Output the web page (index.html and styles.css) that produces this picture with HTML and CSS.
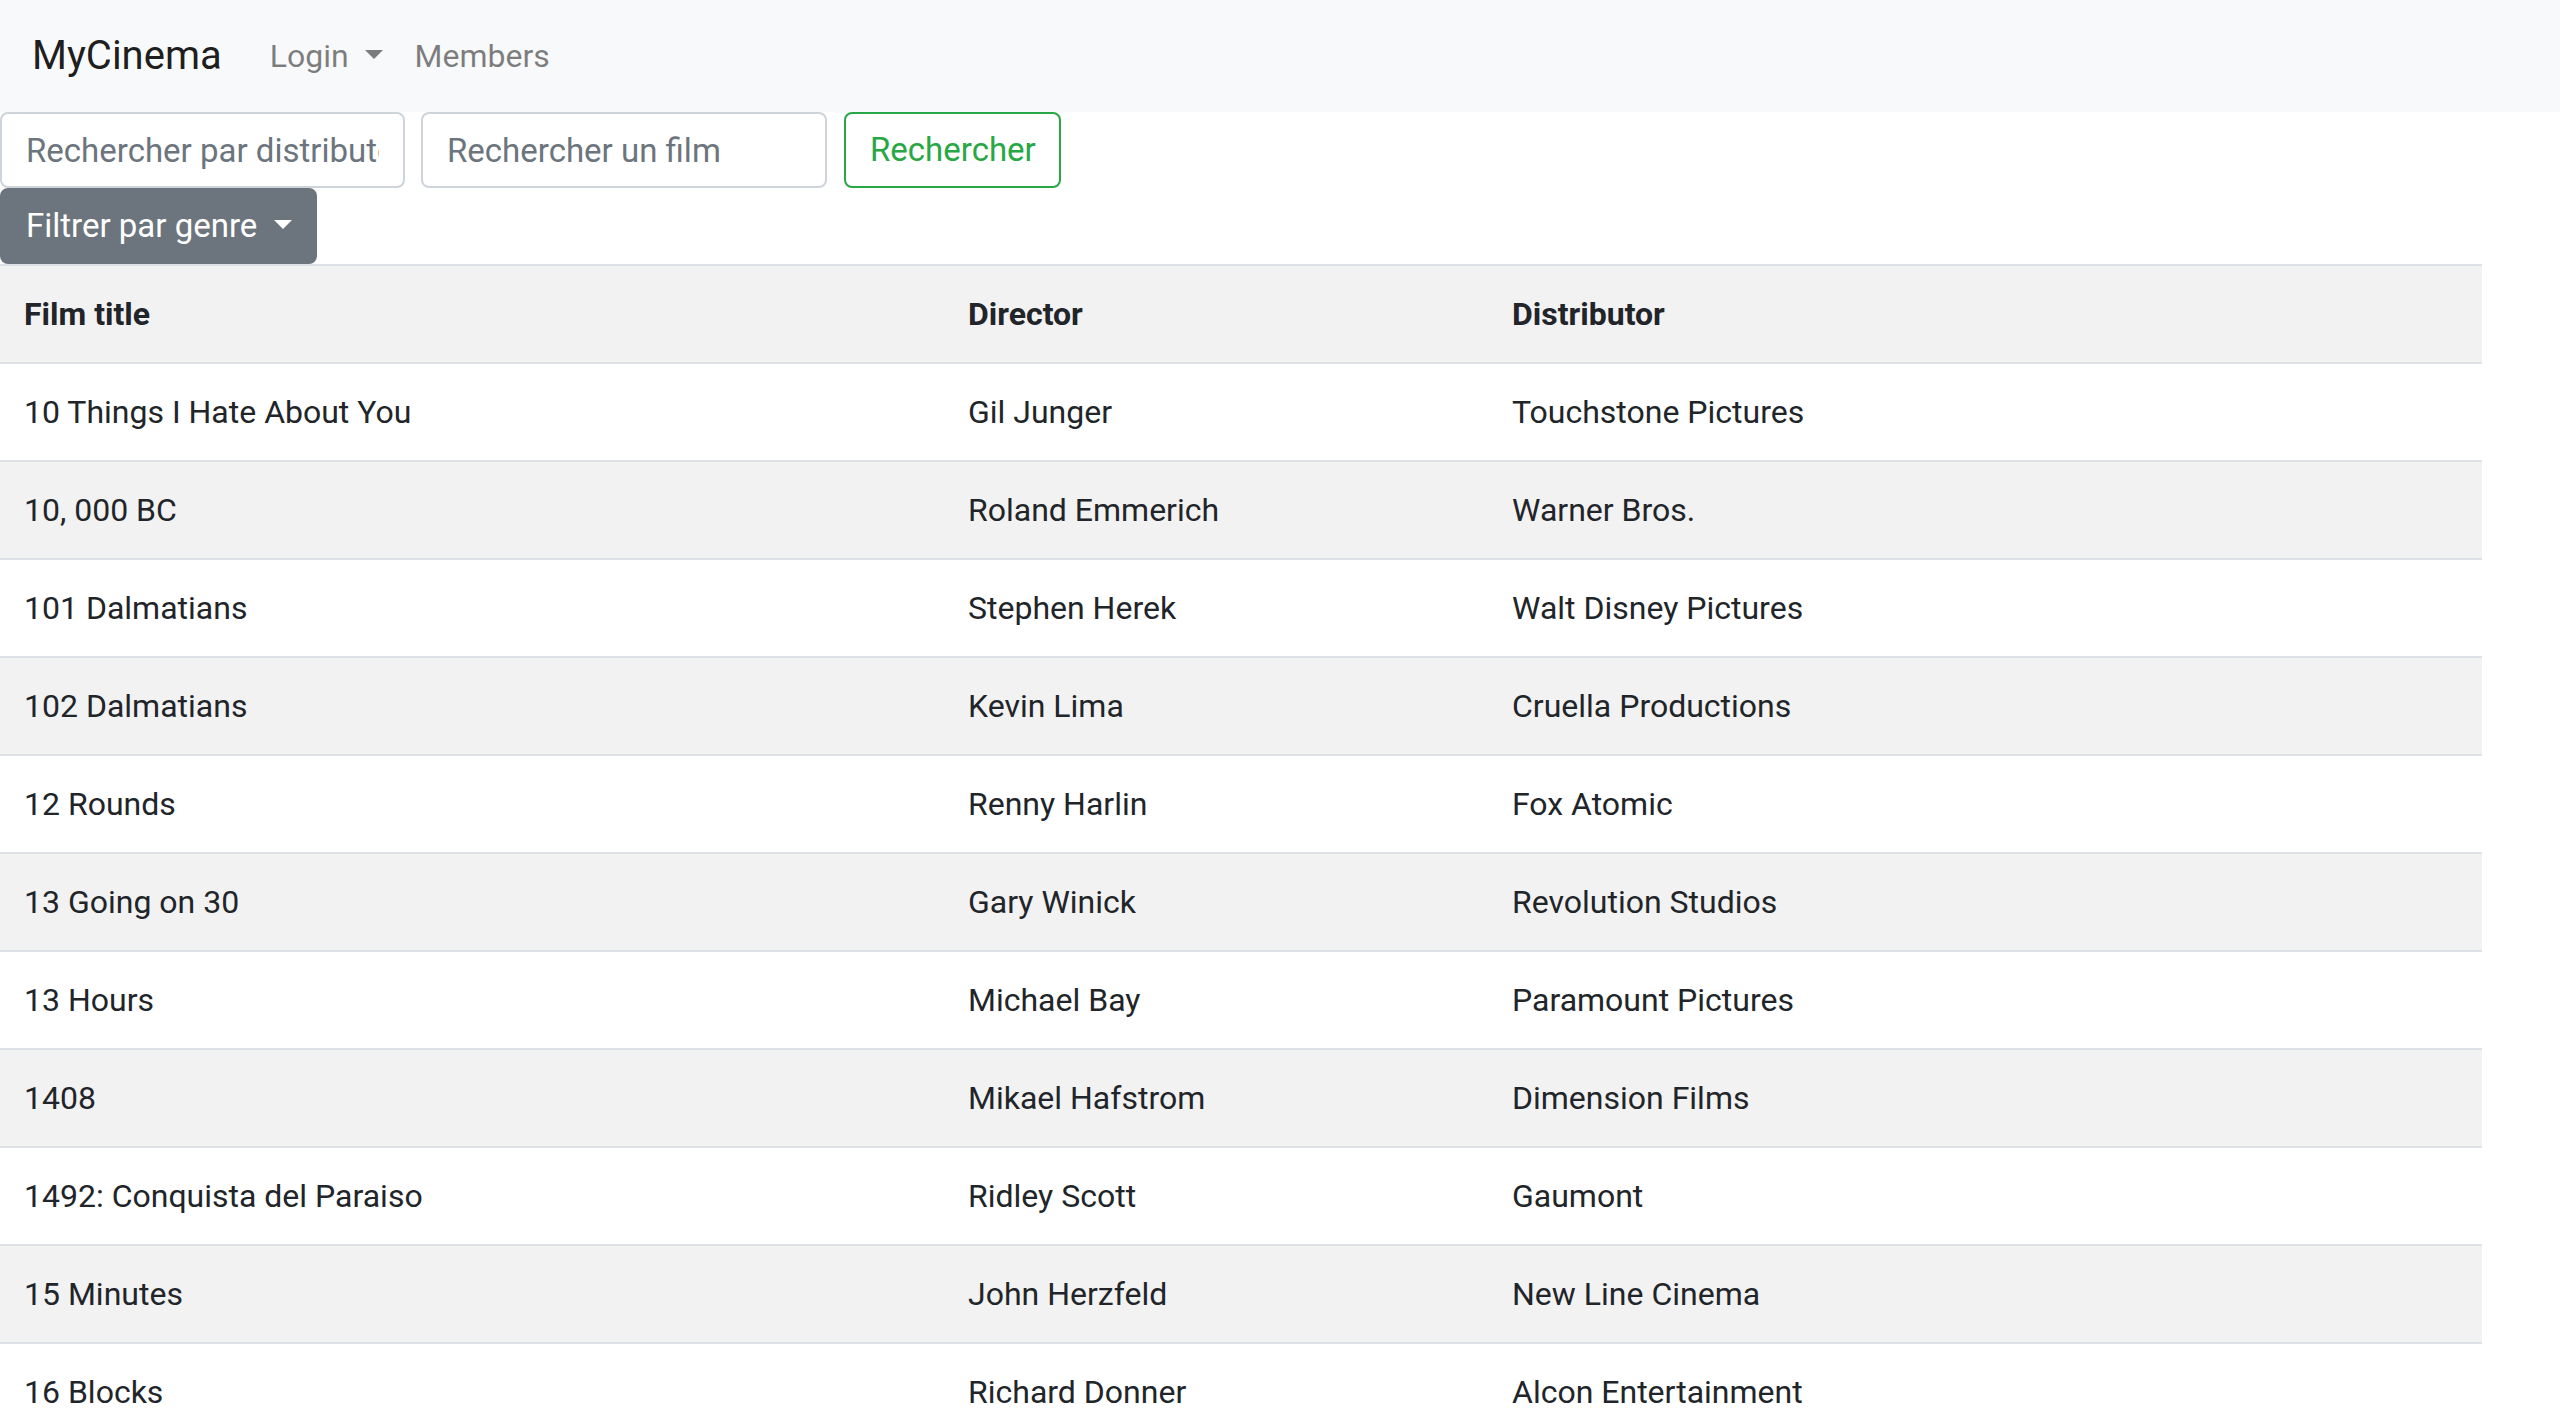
FILE: index.html
```html
<!DOCTYPE html>
<html lang="fr">
<head>
<meta charset="utf-8">
<title>MyCinema</title>
<link rel="stylesheet" href="styles.css">
</head>
<body>
<nav class="navbar">
  <a class="brand" href="#">MyCinema</a>
  <ul class="nav">
    <li><a class="nav-link dropdown-toggle" href="#">Login </a></li>
    <li><a class="nav-link" href="#">Members</a></li>
  </ul>
</nav>
<form class="search">
  <input class="form-control input-distrib" type="text" placeholder="Rechercher par distributeur">
  <input class="form-control input-film" type="text" placeholder="Rechercher un film">
  <button class="btn btn-outline-success" type="button">Rechercher</button>
</form>
<div class="dropdown">
  <button class="btn btn-secondary dropdown-toggle" type="button">Filtrer par genre </button>
</div>
<table class="table">
  <colgroup>
    <col class="col-title">
    <col class="col-director">
    <col class="col-distrib">
  </colgroup>
  <tbody>
    <tr><th>Film title</th><th>Director</th><th>Distributor</th></tr>
    <tr><td>10 Things I Hate About You</td><td>Gil Junger</td><td>Touchstone Pictures</td></tr>
    <tr><td>10, 000 BC</td><td>Roland Emmerich</td><td>Warner Bros.</td></tr>
    <tr><td>101 Dalmatians</td><td>Stephen Herek</td><td>Walt Disney Pictures</td></tr>
    <tr><td>102 Dalmatians</td><td>Kevin Lima</td><td>Cruella Productions</td></tr>
    <tr><td>12 Rounds</td><td>Renny Harlin</td><td>Fox Atomic</td></tr>
    <tr><td>13 Going on 30</td><td>Gary Winick</td><td>Revolution Studios</td></tr>
    <tr><td>13 Hours</td><td>Michael Bay</td><td>Paramount Pictures</td></tr>
    <tr><td>1408</td><td>Mikael Hafstrom</td><td>Dimension Films</td></tr>
    <tr><td>1492: Conquista del Paraiso</td><td>Ridley Scott</td><td>Gaumont</td></tr>
    <tr><td>15 Minutes</td><td>John Herzfeld</td><td>New Line Cinema</td></tr>
    <tr><td>16 Blocks</td><td>Richard Donner</td><td>Alcon Entertainment</td></tr>
  </tbody>
</table>
</body>
</html>
```
FILE: styles.css
```css
* { box-sizing: border-box; }

body {
  margin: 0;
  font-family: Roboto, "Helvetica Neue", Arial, sans-serif;
  font-size: 32px;
  line-height: 1.5;
  color: #212529;
  background: #fff;
}

.navbar {
  display: flex;
  align-items: center;
  padding: 16px 32px;
  background: #f8f9fa;
  height: 112px;
}

.brand {
  font-size: 40px;
  line-height: 60px;
  padding: 10px 0;
  margin-right: 32px;
  color: rgba(0, 0, 0, 0.9);
  text-decoration: none;
}

.nav {
  display: flex;
  list-style: none;
  margin: 0;
  padding: 0;
}

.nav-link {
  display: block;
  padding: 16px;
  color: rgba(0, 0, 0, 0.5);
  text-decoration: none;
  white-space: pre;
}

.dropdown-toggle::after {
  content: "";
  display: inline-block;
  margin-left: 8px;
  vertical-align: 8px;
  border-top: 9px solid;
  border-right: 9px solid transparent;
  border-left: 9px solid transparent;
  border-bottom: 0;
}

.search {
  display: flex;
  align-items: center;
  margin: 0;
}

.form-control {
  height: 76px;
  padding: 12px 24px;
  font-family: inherit;
  font-size: 33px;
  line-height: 48px;
  color: #495057;
  background: #fff;
  border: 2px solid #ced4da;
  border-radius: 8px;
  outline: none;
}

.form-control::placeholder {
  color: #6c757d;
  opacity: 1;
}

.input-distrib {
  width: 405px;
  margin-right: 16px;
}

.input-film {
  width: 406px;
  margin-right: 17px;
}

.btn {
  display: inline-block;
  height: 76px;
  padding: 12px 24px;
  font-family: inherit;
  font-size: 33px;
  line-height: 48px;
  border: 2px solid transparent;
  border-radius: 8px;
  cursor: pointer;
  white-space: pre;
}

.btn-outline-success {
  width: 217px;
  color: #28a745;
  background: transparent;
  border-color: #28a745;
}

.btn-secondary {
  width: 317px;
  color: #fff;
  background: #6c757d;
  border-color: #6c757d;
}

.dropdown {
  display: block;
}

.table {
  width: 2482px;
  border-collapse: collapse;
  table-layout: fixed;
  margin: 0;
}

.col-title { width: 944px; }
.col-director { width: 544px; }
.col-distrib { width: 994px; }

.table th,
.table td {
  padding: 24px;
  text-align: left;
  vertical-align: top;
  border-top: 2px solid #dee2e6;
  line-height: 48px;
}

.table th {
  font-weight: 700;
}

.table tbody tr:nth-of-type(odd) {
  background: #f2f2f2;
}
```
